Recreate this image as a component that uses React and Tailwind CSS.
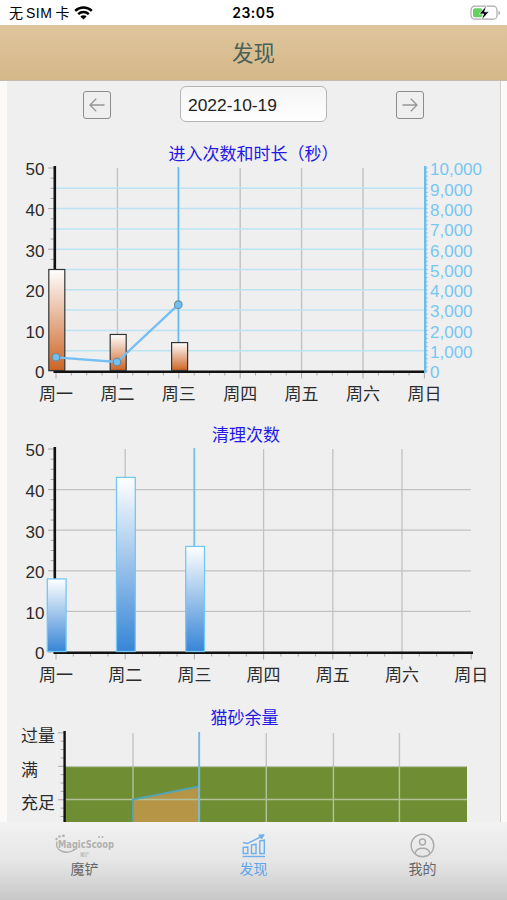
const LABEL_FONT =
  "font-['Liberation_Sans','Noto_Sans_CJK_SC',sans-serif] text-[17px]";
const DAYS = ["周一", "周二", "周三", "周四", "周五", "周六", "周日"];

const range = (count) => Array.from({ length: count }, (_, i) => i);

const StatusBar = () => (
  <div className="grid h-[25px] grid-cols-3 items-center bg-white pt-px pr-[6px] pl-[9px] text-black">
    <div className="flex items-center">
      <div className="flex items-center gap-[3px] text-[14px] leading-none whitespace-nowrap">
        <span>无</span>
        <span className="tracking-[0.5px]">SIM</span>
        <span>卡</span>
      </div>
      <svg width="19" height="14" viewBox="0 0 19 14" fill="none" className="-mt-px ml-[5px]">
        <path d="M1.2 4.9a12 12 0 0 1 16.6 0" stroke="#000" strokeWidth="2.5" />
        <path d="M4.2 8.1a7.6 7.6 0 0 1 10.6 0" stroke="#000" strokeWidth="2.4" />
        <path d="M9.5 13.6 6.4 10.6a4.4 4.4 0 0 1 6.2 0z" fill="#000" />
      </svg>
    </div>
    <span className="pr-[3px] text-center font-[Inter,sans-serif] text-[14px] leading-none font-semibold tracking-[0.5px]">
      23:05
    </span>
    <div className="flex justify-end">
      <svg width="31" height="16" viewBox="0 0 31 16" fill="none">
        <rect x="1" y="1.2" width="26" height="13" rx="3.8" stroke="#a9a9a9" strokeWidth="1.2" />
        <rect x="3" y="3.2" width="9.5" height="9" rx="2" fill="#62d15f" />
        <path d="M28.5 5.5v4.6c2-.8 2-3.800 0-4.600z" fill="#a9a9a9" />
        <path d="M16.6.6 9.2 8.9h4.5l-2.3 6.300 7.7-8.400h-4.6z" fill="#000" stroke="#fff" strokeWidth="0.7" />
      </svg>
    </div>
  </div>
);

const ArrowButton = ({ flip }) => (
  <button className="flex size-7 items-center justify-center rounded-[3px] border border-[#8c8c8c]">
    <svg
      width="16"
      height="16"
      viewBox="0 0 16 16"
      fill="none"
      stroke="#969696"
      strokeWidth="1.3"
      className={flip ? "rotate-180" : ""}
    >
      <path d="M7.2 1.8 1 8l6.2 6.2M1 8h14.500" />
    </svg>
  </button>
);

const Title = ({ x = 239, y, children }) => (
  <text x={x} y={y} textAnchor="middle" fill="#2418e6">
    {children}
  </text>
);

// Week day ticks, three minor ones between each pair, with the names below
const DayAxis = ({ left, step, y }) => (
  <g>
    {range(25).map((i) => {
      const x = left + (i * step) / 4;
      return (
        <line key={i} x1={x} x2={x} y1={y} y2={y + (i % 4 ? 3.5 : 6.5)} stroke="#a8a8a8" />
      );
    })}
    {DAYS.map((day, i) => (
      <text key={day} x={left + i * step} y={y + 28} textAnchor="middle" fill="#2b2b2b">
        {day}
      </text>
    ))}
  </g>
);

const CountAxis = ({ top, bottom }) => (
  <g>
    {range(21).map((i) => {
      const y = top + ((bottom - top) * i) / 20;
      return (
        <line key={i} x1={i % 4 ? 43.5 : 41} x2="47" y1={y} y2={y} stroke="#a8a8a8" />
      );
    })}
    {[50, 40, 30, 20, 10, 0].map((n, i) => (
      <text key={n} x="37.5" y={top + ((bottom - top) * i) / 5 + 7.3} textAnchor="end" fill="#2b2b2b">
        {n}
      </text>
    ))}
    <line x1="47.8" x2="47.8" y1={top - 2} y2={bottom + 2} stroke="#111" strokeWidth="2.6" />
  </g>
);

const VisitsChart = () => {
  const top = 41;
  const bottom = 244;
  const left = 49;
  const step = 61.4;
  const right = left + step * 6;
  const bars = [25, 9, 7];
  const points = [
    [49, 230.3],
    [110, 235],
    [171.3, 177.7],
  ];

  return (
    <svg width="493" height="288" viewBox="0 0 493 288" className={LABEL_FONT}>
      <defs>
        <linearGradient id="copper" x1="0" y1="0" x2="0" y2="1">
          <stop offset="0" stopColor="#ffffff" />
          <stop offset="1" stopColor="#cd6424" />
        </linearGradient>
      </defs>
      <Title x={246.5} y="32.5">进入次数和时长（秒）</Title>
      {[1, 2, 3, 4, 5].map((i) => (
        <line key={i} x1={left + i * step} x2={left + i * step} y1={top} y2={bottom} stroke="#c2c2c2" strokeWidth="1.4" />
      ))}
      {range(9).map((i) => {
        const y = top + (i + 1) * 20.3;
        return <line key={i} x1={left} x2={right} y1={y} y2={y} stroke="#bce3f4" strokeWidth="1.5" />;
      })}
      <line x1="171.3" x2="171.3" y1="40" y2={bottom} stroke="#62bdee" strokeWidth="1.5" />
      <CountAxis top={top} bottom={bottom} />
      <DayAxis left={left} step={step} y={245} />
      {range(51).map((i) => {
        const y = top + i * 4.06;
        return <line key={i} x1={right + 1} x2={right + 3.5} y1={y} y2={y} stroke="#9fb5c0" strokeWidth="0.8" />;
      })}
      <line x1="47" x2={right + 1} y1="244.7" y2="244.7" stroke="#111" strokeWidth="2.6" />
      <line x1={right + 0.8} x2={right + 0.8} y1="39" y2="246" stroke="#64c0f2" strokeWidth="2.4" />
      {range(11).map((i) => (
        <text key={i} x="423" y={top + i * 20.3 + 7.3} fill="#77c7f2">
          {(10000 - i * 1000).toLocaleString("en-US")}
        </text>
      ))}
      {bars.map((n, i) => (
        <rect
          key={i}
          x={left + i * step - 7.2}
          y={bottom - n * 4.06}
          width="16"
          height={n * 4.06 - 0.5}
          fill="url(#copper)"
          stroke="#333"
          strokeWidth="1.2"
        />
      ))}
      <polyline points={points.join(" ")} fill="none" stroke="#74bff3" strokeWidth="2.3" />
      {points.map(([x, y]) => (
        <circle key={x} cx={x} cy={y} r="3.8" fill="#6fc0f5" stroke="#6f8796" strokeWidth="1.1" />
      ))}
    </svg>
  );
};

const CleaningChart = () => {
  const top = 34;
  const bottom = 237;
  const left = 49;
  const step = 69.2;
  const bars = [18, 43, 26];

  return (
    <svg width="493" height="280" viewBox="0 0 493 280" className={LABEL_FONT}>
      <defs>
        <linearGradient id="sky" x1="0" y1="0" x2="0" y2="1">
          <stop offset="0" stopColor="#ffffff" />
          <stop offset="1" stopColor="#3785d6" />
        </linearGradient>
      </defs>
      <Title y="25.5">清理次数</Title>
      {[1, 2, 3, 4, 5].map((i) => (
        <line key={i} x1={left + i * step} x2={left + i * step} y1={top} y2={bottom} stroke="#c2c2c2" strokeWidth="1.3" />
      ))}
      {[1, 2, 3, 4].map((i) => (
        <line key={i} x1={left} x2="464" y1={top + i * 40.6} y2={top + i * 40.6} stroke="#c2c2c2" strokeWidth="1.3" />
      ))}
      <line x1="187.3" x2="187.3" y1="33" y2={bottom} stroke="#6fc4e6" strokeWidth="1.7" />
      <CountAxis top={top} bottom={bottom} />
      <DayAxis left={left} step={step} y={238} />
      <line x1="47" x2="466" y1="237.8" y2="237.8" stroke="#111" strokeWidth="2.6" />
      {bars.map((n, i) => (
        <rect
          key={i}
          x={left + i * step - 8.7}
          y={bottom - n * 4.06}
          width="18.8"
          height={n * 4.06 - 0.5}
          fill="url(#sky)"
          stroke="#74c7f2"
          strokeWidth="1.3"
        />
      ))}
    </svg>
  );
};

const LitterChart = () => {
  const days = [126, 192.2, 259.3, 326.4, 392.4];

  return (
    <svg width="493" height="127" viewBox="0 0 493 127" className={LABEL_FONT}>
      <Title x={237.5} y="28.8">猫砂余量</Title>
      <rect x="58" y="71.7" width="402" height="56" fill="#6f8e34" />
      <polygon points="126,104.5 192,91.5 192,128 126,128" fill="#b79547" />
      {days.map((x) => (
        <g key={x}>
          <line x1={x} x2={x} y1="38" y2="72" stroke="#c4c4c4" strokeWidth="1.4" />
          {x !== 126 && (
            <line x1={x} x2={x} y1="72" y2="127" stroke="#b3c19a" strokeWidth="1.4" />
          )}
        </g>
      ))}
      <line x1="126" x2="126" y1="72" y2="104" stroke="#b3c19a" strokeWidth="1.4" />
      <line x1="58" x2="460" y1="71.7" y2="71.7" stroke="#b5bda6" />
      <line x1="58" x2="460" y1="104.5" y2="104.5" stroke="#b3c19a" strokeWidth="1.6" />
      <path d="M126 127v-22.500l66-13" fill="none" stroke="#51a5b5" strokeWidth="1.8" />
      <line x1="192.2" x2="192.2" y1="37" y2="127" stroke="#6bbdea" strokeWidth="1.8" />
      {range(12).map((i) => {
        const y = 37.8 + i * 8.37;
        return <line key={i} x1={i % 4 ? 53.5 : 51} x2="57" y1={y} y2={y} stroke="#a8a8a8" />;
      })}
      <line x1="57.6" x2="57.6" y1="36" y2="127" stroke="#111" strokeWidth="2.4" />
      <g fill="#2b2b2b">
        <text x="14" y="46.5">过量</text>
        <text x="14" y="81">满</text>
        <text x="14" y="114">充足</text>
      </g>
    </svg>
  );
};

const ScoopLogo = () => (
  <svg width="62" height="25" viewBox="0 0 62 25" fill="none">
    <g fill="#b0b0b0">
      <circle cx="2.5" cy="6" r="1.2" />
      <circle cx="5.5" cy="3.5" r="1.3" />
      <circle cx="9.5" cy="2.8" r="1.4" />
      <circle cx="45" cy="4" r="1" />
      <circle cx="48.5" cy="4" r="1" />
      <text
        x="4"
        y="15"
        textLength="56"
        lengthAdjust="spacingAndGlyphs"
        className="font-['DejaVu_Sans',sans-serif] text-[11px] font-bold"
      >
        MagicScoop
      </text>
      <text x="26" y="23" className="font-['Noto_Sans_CJK_SC',sans-serif] text-[4.5px]">
        魔铲
      </text>
    </g>
    <path d="M3 8.500c-2.500 9 8 13.500 17.500 8.500" stroke="#b0b0b0" strokeWidth="1.4" />
  </svg>
);

const TrendIcon = () => (
  <svg width="24" height="24" viewBox="0 0 24 24" fill="none" stroke="#6fb0ec" strokeWidth="1.4">
    <path d="M.5 22.500h22.500" />
    <path d="M1.200 13.500 5.800 13v6.500H1.200zM9.500 11l4.500-.8v9.300H9.500zM17.800 7l4.500-.8v13.300h-4.500z" />
    <path d="m1 8.500 4.500 1L19.500 2.500" />
    <path d="m16.800 1 5.400-.2-2.700 4.200z" fill="#6fb0ec" strokeWidth="1" />
  </svg>
);

const ProfileIcon = () => (
  <svg width="25" height="25" viewBox="0 0 25 25" fill="none" stroke="#aaa" strokeWidth="1.4">
    <circle cx="12.500" cy="12.500" r="11.300" />
    <circle cx="12.500" cy="9" r="3" />
    <path d="M5.200 20.500c1-7 13.600-7 14.600 0" />
  </svg>
);

const TABS = [
  { label: "魔铲", icon: <ScoopLogo />, color: "text-[#666]" },
  { label: "发现", icon: <TrendIcon />, color: "text-[#5da5ec]" },
  { label: "我的", icon: <ProfileIcon />, color: "text-[#666]" },
];

const App = () => (
  <div className="flex h-[900px] w-[507px] flex-col overflow-hidden bg-[#fcfaf9] font-['Liberation_Sans','Noto_Sans_CJK_SC',sans-serif]">
    <StatusBar />
    <header className="flex h-14 items-center justify-center border-b border-[#c3bbb0] bg-linear-to-b from-[#dfc59d] to-[#d5b889] pt-[5px]">
      <h1 className="text-[21.5px] leading-none text-[#4a6159]">发现</h1>
    </header>

    <main className="ml-[7px] flex h-[741px] w-[494px] flex-col border-r border-[#d0cdca] bg-[#efefef]">
      <div className="flex h-[46px] shrink-0 items-start justify-between pt-[5px] pr-[76px] pl-[76px]">
        <div className="pt-[5px]">
          <ArrowButton />
        </div>
        <div className="flex h-9 w-[147px] items-center rounded-md border border-[#b5b5b5] bg-linear-to-b from-[#f5f5f5] to-white pt-[3px] pl-[7px] text-[17.4px] text-[#222]">
          2022-10-19
        </div>
        <div className="pt-[5px]">
          <ArrowButton flip />
        </div>
      </div>
      <VisitsChart />
      <CleaningChart />
      <LitterChart />
    </main>

    <nav className="grid h-[78px] grid-cols-3 bg-linear-to-b from-[#f2f2f2] via-[#e6e6e6] to-[#c8c8c8]">
      {TABS.map(({ label, icon, color }) => (
        <div key={label} className="flex flex-col items-center pt-[11px]">
          <div className="flex h-[25px] items-center">{icon}</div>
          <span className={`mt-1 text-[14px] leading-[14px] ${color}`}>{label}</span>
        </div>
      ))}
    </nav>
  </div>
);

export default App;
